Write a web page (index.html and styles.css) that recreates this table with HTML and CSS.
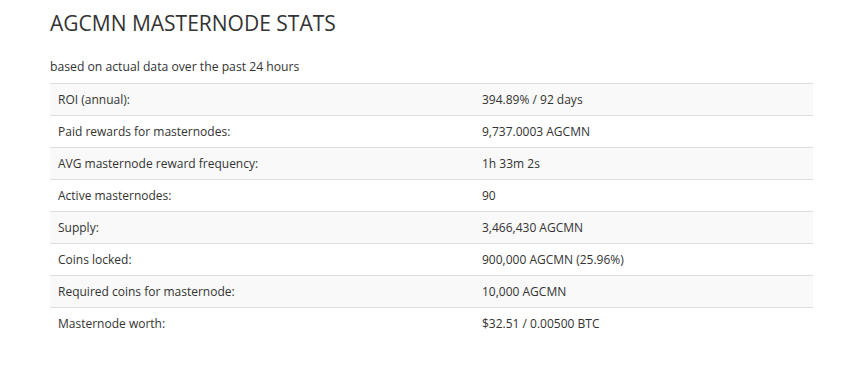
FILE: index.html
```html
<!DOCTYPE html>
<html>
<head>
<meta charset="utf-8">
<link rel="stylesheet" href="styles.css">
</head>
<body>
<div class="topbar"></div>
<main class="content">
  <h1 class="title">AGCMN MASTERNODE STATS</h1>
  <p class="subtitle">based on actual data over the past 24 hours</p>
  <table class="stats">
    <tbody>
      <tr><td class="label">ROI (annual):</td><td>394.89% / 92 days</td></tr>
      <tr><td class="label">Paid rewards for masternodes:</td><td>9,737.0003 AGCMN</td></tr>
      <tr><td class="label">AVG masternode reward frequency:</td><td>1h 33m 2s</td></tr>
      <tr><td class="label">Active masternodes:</td><td>90</td></tr>
      <tr><td class="label">Supply:</td><td>3,466,430 AGCMN</td></tr>
      <tr><td class="label">Coins locked:</td><td>900,000 AGCMN (25.96%)</td></tr>
      <tr><td class="label">Required coins for masternode:</td><td>10,000 AGCMN</td></tr>
      <tr><td class="label">Masternode worth:</td><td>$32.51 / 0.00500 BTC</td></tr>
    </tbody>
  </table>
</main>
</body>
</html>
```
FILE: styles.css
```css
html, body {
  margin: 0;
  padding: 0;
  background: #fff;
}
body {
  font-family: "Open Sans", "Noto Sans", sans-serif;
  color: #333;
  font-size: 12px;
}
.topbar {
  height: 0;
  box-shadow: 0 0 5px rgba(0,0,0,0.12);
}
.content {
  padding: 9px 0 0 50px;
  width: 763px;
}
.title {
  margin: 0;
  font-size: 21px;
  font-weight: 400;
  line-height: 29px;
  color: #333;
}
.subtitle {
  margin: 20px 0 0 0;
  line-height: 18px;
  font-size: 12.2px;
}
.stats {
  margin-top: 7px;
  width: 763px;
  border-collapse: collapse;
}
.stats td {
  border-top: 1px solid #ddd;
  height: 31px;
  padding: 0 8px;
  vertical-align: middle;
  line-height: 18px;
}
.stats td.label {
  width: 408px;
}
.stats tr:nth-child(odd) td {
  background: #f9f9f9;
}
```
